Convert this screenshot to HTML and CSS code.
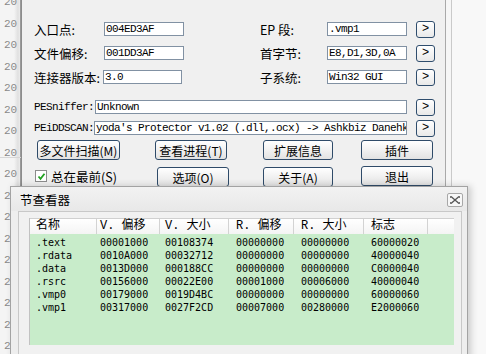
FILE: index.html
```html
<!DOCTYPE html>
<html lang="zh-CN">
<head>
  <meta charset="UTF-8">
  <title>PEiD</title>
  <link rel="stylesheet" href="styles.css">
</head>
<body>
  <div class="desktop">
    <!-- background window: line numbers -->
    <div class="strip">
      <div>20</div><div>20</div><div>20</div><div>20</div><div>20</div>
      <div>20</div><div>20</div><div>20</div><div>20</div><div>20</div>
      <div>20</div><div>20</div><div>20</div><div>20</div><div>20</div>
      <div>20</div><div>20</div>
    </div>

    <!-- main PEiD window -->
    <div class="main-win">
      <div class="fields">
        <span class="lbl">入口点:</span>
        <div class="box">004ED3AF</div>
        <span class="lbl">EP 段:</span>
        <div class="box">.vmp1</div>
        <button class="arrow">&gt;</button>

        <span class="lbl">文件偏移:</span>
        <div class="box">001DD3AF</div>
        <span class="lbl">首字节:</span>
        <div class="box">E8,D1,3D,0A</div>
        <button class="arrow">&gt;</button>

        <span class="lbl">连接器版本:</span>
        <div class="box shift">3.0</div>
        <span class="lbl">子系统:</span>
        <div class="box">Win32 GUI</div>
        <button class="arrow">&gt;</button>
      </div>

      <div class="scans">
        <span class="lbl-mono">PESniffer:</span>
        <div class="box wide">Unknown</div>
        <button class="arrow">&gt;</button>

        <span class="lbl-mono">PEiDDSCAN:</span>
        <div class="box wide">yoda's Protector v1.02 (.dll,.ocx) -&gt; Ashkbiz Danehkar</div>
        <button class="arrow">&gt;</button>
      </div>

      <div class="actions">
        <button class="btn b1">多文件扫描(M)</button>
        <button class="btn b2">查看进程(T)</button>
        <button class="btn b3">扩展信息</button>
        <button class="btn b4">插件</button>

        <label class="check">
          <span class="tick">
            <svg width="9" height="9" viewBox="0 0 9 9"><polyline points="1.5,4.5 3.5,6.8 7.5,1.8" fill="none" stroke="#21a121" stroke-width="1.8"/></svg>
          </span>
          总在最前(S)
        </label>
        <button class="btn b2 low">选项(O)</button>
        <button class="btn b3 low">关于(A)</button>
        <button class="btn b4">退出</button>
      </div>
    </div>

    <!-- section viewer dialog -->
    <div class="dialog">
      <div class="dlg-title">
        <span>节查看器</span>
        <span class="close">
          <svg width="10" height="8" viewBox="0 0 10 8"><path d="M1 0.5 L9 7.5 M9 0.5 L1 7.5" stroke="#555" stroke-width="1.3"/><rect x="0" y="0" width="2" height="2" fill="#777"/><rect x="8" y="0" width="2" height="2" fill="#777"/><rect x="0" y="6" width="2" height="2" fill="#777"/><rect x="8" y="6" width="2" height="2" fill="#777"/></svg>
        </span>
      </div>
      <div class="dlg-body">
        <div class="list">
          <div class="row head">
            <span>名称</span><span>V. 偏移</span><span>V. 大小</span><span>R. 偏移</span><span>R. 大小</span><span>标志</span><span></span>
          </div>
          <div class="row"><span>.text</span><span>00001000</span><span>00108374</span><span>00000000</span><span>00000000</span><span>60000020</span><span></span></div>
          <div class="row"><span>.rdata</span><span>0010A000</span><span>00032712</span><span>00000000</span><span>00000000</span><span>40000040</span><span></span></div>
          <div class="row"><span>.data</span><span>0013D000</span><span>000188CC</span><span>00000000</span><span>00000000</span><span>C0000040</span><span></span></div>
          <div class="row"><span>.rsrc</span><span>00156000</span><span>00022E00</span><span>00001000</span><span>00006000</span><span>40000040</span><span></span></div>
          <div class="row"><span>.vmp0</span><span>00179000</span><span>0019D4BC</span><span>00000000</span><span>00000000</span><span>60000060</span><span></span></div>
          <div class="row"><span>.vmp1</span><span>00317000</span><span>0027F2CD</span><span>00007000</span><span>00280000</span><span>E2000060</span><span></span></div>
        </div>
      </div>
    </div>
  </div>
</body>
</html>
```

FILE: styles.css
```css
/* General */
* {
  box-sizing: border-box;
}

body {
  margin: 0;
  background: #f7f7f7;
  font-family: "Liberation Mono", "Noto Sans CJK SC", monospace;
  font-size: 11px;
  color: #000;
}

.desktop {
  position: relative;
  width: 486px;
  height: 354px;
  overflow: hidden;
  background: linear-gradient(to right, #ececec, #f8f8f8 12px) #f8f8f8;
}

/* Background window with line numbers */
.strip {
  position: absolute;
  left: 0;
  top: 0;
  width: 22px;
  height: 354px;
  padding: 0 0 0 4px;
  color: #8a8a8a;
  line-height: 21.5px;
  background:
    linear-gradient(to bottom, transparent 157px, #d6d6d6 157px, #d6d6d6 158px, transparent 158px),
    linear-gradient(to right, #f4f4f4 14px, #e0e0e0 18px, #ececec 20px, #9a9a9a 20px);
}

.strip div {
  position: relative;
  top: -8px;
}

/* Main window */
.main-win {
  position: absolute;
  left: 21px;
  top: 0;
  width: 431px;
  height: 354px;
  padding: 22px 0 0 12px;
  background: #f0f0f0;
  border-left: 1px solid #8c8c8c;
  box-shadow: inset -1px 0 0 #cacaca, inset -6px 0 0 #f6f6f6, inset -7px 0 0 #a9a9a9;
}

.fields {
  display: grid;
  grid-template-columns: 70px 156px 67px 89px 19px;
  grid-auto-rows: 14px;
  row-gap: 10px;
  align-items: center;
}

.lbl {
  font-family: "Noto Sans CJK SC", sans-serif;
  font-size: 12.5px;
  white-space: nowrap;
}

.lbl-mono {
  letter-spacing: -0.6px;
  white-space: nowrap;
}

.box {
  width: 80px;
  height: 14px;
  padding-left: 1px;
  border: 1px solid #8191a3;
  background: #fff;
  line-height: 12px;
  letter-spacing: -0.6px;
  white-space: nowrap;
  overflow: hidden;
}

.box.shift {
  margin-left: -1px;
  width: 79px;
}

.box.wide {
  width: 312px;
}

.arrow {
  width: 19px;
  height: 17px;
  padding: 0;
  border: 1px solid #2f4d6d;
  border-radius: 3px;
  background: linear-gradient(#ffffff, #e9e9e9);
  font-family: "Liberation Mono", monospace;
  font-size: 12px;
  line-height: 14px;
  color: #000;
  align-self: center;
}

.scans {
  display: grid;
  grid-template-columns: 61px 321px 19px;
  grid-auto-rows: 14px;
  row-gap: 7px;
  align-items: center;
  margin-top: 16px;
}

.scans .box.wide + .arrow,
.scans .box:last-of-type {
  margin-left: 0;
}

.scans span:nth-of-type(2) + .box {
  margin-left: -1px;
  width: 313px;
}

/* Buttons */
.actions {
  display: grid;
  grid-template-columns: 118px 108px 98px 72px;
  grid-template-rows: 20px 20px;
  row-gap: 6px;
  margin: 5px 0 0 3px;
}

.btn {
  height: 20px;
  padding: 0;
  border: 1px solid #2f4b69;
  border-radius: 3px;
  background: linear-gradient(#ffffff, #f1f1f1 50%, #e2e2e2);
  font-family: "Noto Sans CJK SC", sans-serif;
  font-size: 12px;
  line-height: 17px;
  color: #000;
}

.b1 { width: 83px; }
.b2 { width: 72px; }
.b3 { width: 70px; }
.b4 { width: 72px; }

.low {
  margin-left: 2px;
  margin-top: 1px;
}

.b3.low {
  margin-left: 0;
}

.check {
  display: flex;
  align-items: center;
  gap: 4px;
  margin-left: -2px;
  font-family: "Noto Sans CJK SC", sans-serif;
  font-size: 12.5px;
}

.tick {
  display: flex;
  align-items: center;
  justify-content: center;
  width: 12px;
  height: 12px;
  border: 1px solid #8c8c8c;
  background: #fff;
}

/* Section viewer dialog */
.dialog {
  position: absolute;
  left: 10px;
  top: 186px;
  width: 458px;
  height: 180px;
  background: #eeeeee;
  border: 1px solid #a3a3a3;
  box-shadow: 3px 0 7px rgba(0, 0, 0, 0.18);
}

.dlg-title {
  display: flex;
  align-items: center;
  justify-content: space-between;
  height: 24px;
  padding: 0 4px 0 9px;
  font-family: "Noto Sans CJK SC", sans-serif;
  font-size: 12.5px;
  background: linear-gradient(#f2f2f2, #e8e8e8);
}

.close {
  display: flex;
  align-items: center;
  justify-content: center;
  width: 16px;
  height: 14px;
  margin-top: 2px;
  border: 1px solid #a8a8a8;
  border-radius: 2px;
  background: #f7f7f7;
}

.dlg-body {
  height: 160px;
  margin: 0 5px 0 7px;
  padding: 6px 0 0 10px;
  border: 1px solid #c8c8c8;
  border-bottom: none;
  background: #f1f1f1;
}

.list {
  width: 425px;
  height: 127px;
  border-left: 1px solid #c2c2c2;
  background: #c8ecca;
}

.row {
  display: grid;
  grid-template-columns: 67px 63px 69px 65px 70px 64px 1fr;
  height: 13px;
  line-height: 13px;
  font-family: "DejaVu Sans Mono", "Noto Sans CJK SC", monospace;
  font-size: 10px;
  white-space: nowrap;
}

.row span:nth-child(1) { padding-left: 6px; }
.row span:nth-child(2) { padding-left: 3px; }
.row span:nth-child(3) { padding-left: 5px; }
.row span:nth-child(4) { padding-left: 7px; }
.row span:nth-child(5) { padding-left: 7px; }
.row span:nth-child(6) { padding-left: 7px; }

.row.head {
  height: 16px;
  line-height: 15px;
  margin-bottom: 2px;
  border-top: 1px solid #d0d0d0;
  background: linear-gradient(#ffffff, #f4f4f4);
  font-family: "Liberation Mono", "Noto Sans CJK SC", monospace;
  font-size: 12px;
}

.row.head span {
  border-right: 1px solid #d3d3d3;
}

.row.head span:last-child {
  border-right: none;
}
```
